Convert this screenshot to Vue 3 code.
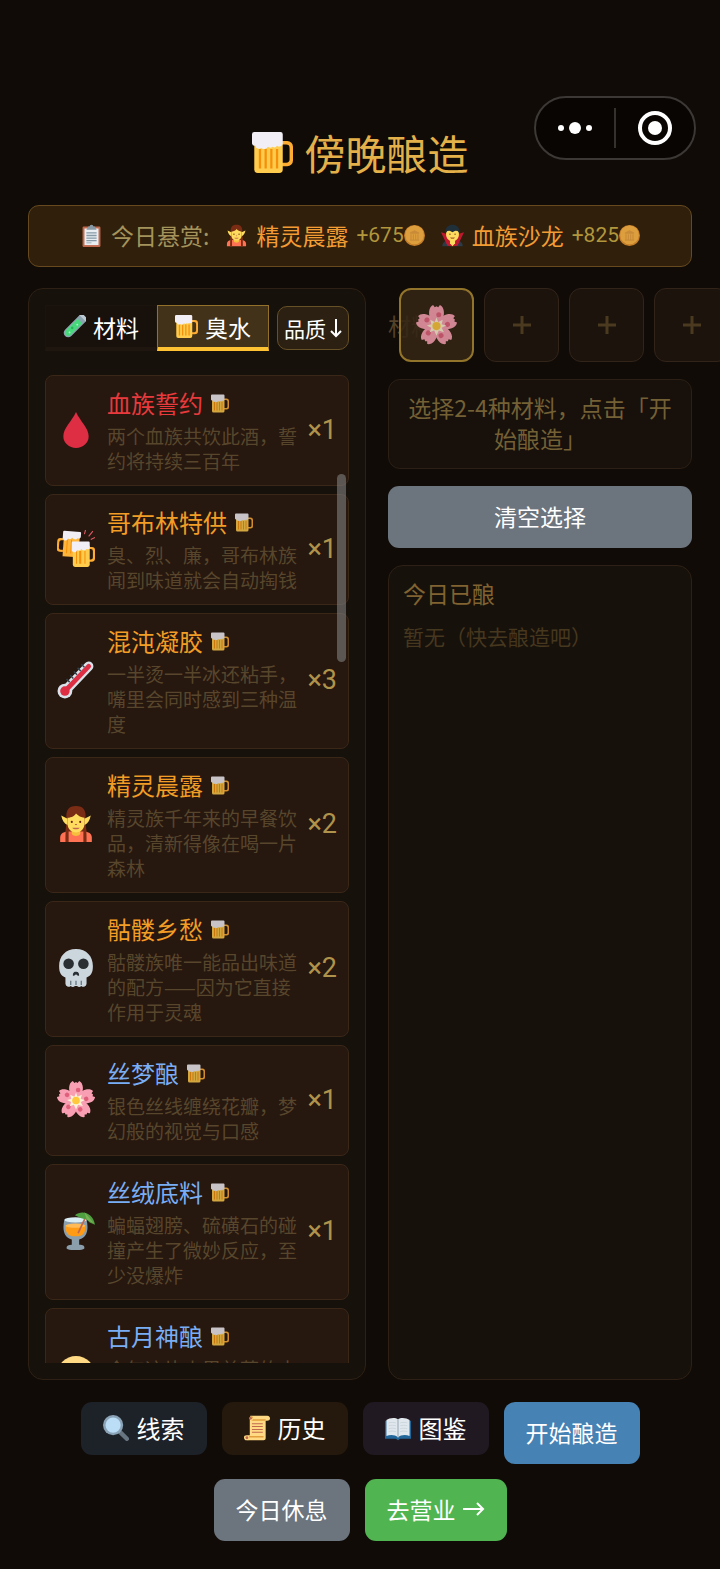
<script setup>
import { ref } from 'vue'

const tab = ref('brew')

const bounties = [
  { icon: 'elf', name: '精灵晨露', reward: 675 },
  { icon: 'vampire', name: '血族沙龙', reward: 825 },
]

const drinks = [
  { icon: 'drop', name: '血族誓约', tier: 'legend', count: 1, desc: '两个血族共饮此酒，誓约将持续三百年' },
  { icon: 'cheers', name: '哥布林特供', tier: 'epic', count: 1, desc: '臭、烈、廉，哥布林族闻到味道就会自动掏钱' },
  { icon: 'thermo', name: '混沌凝胶', tier: 'epic', count: 3, desc: '一半烫一半冰还粘手，嘴里会同时感到三种温度' },
  { icon: 'elf', name: '精灵晨露', tier: 'epic', count: 2, desc: '精灵族千年来的早餐饮品，清新得像在喝一片森林' },
  { icon: 'skull', name: '骷髅乡愁', tier: 'epic', count: 2, desc: '骷髅族唯一能品出味道的配方——因为它直接作用于灵魂' },
  { icon: 'flower', name: '丝梦酿', tier: 'rare', count: 1, desc: '银色丝线缠绕花瓣，梦幻般的视觉与口感' },
  { icon: 'cocktail', name: '丝绒底料', tier: 'rare', count: 1, desc: '蝙蝠翅膀、硫磺石的碰撞产生了微妙反应，至少没爆炸' },
  { icon: 'moon', name: '古月神酿', tier: 'rare', count: 1, desc: '今年这片山里美莓的水味道格外清甜，喝下去像月光' },
]

const slots = ref(['flower', null, null, null])
const clear = () => { slots.value = [null, null, null, null] }
</script>

<template>
  <svg class="sprite" aria-hidden="true">
    <symbol id="beer" viewBox="0 0 36 36">
      <path d="M26 8h5a5 5 0 0 1 5 5v12a5 5 0 0 1-5 5h-5v-3h4a3 3 0 0 0 3-3V14a3 3 0 0 0-3-3h-4z" fill="#ffac33" />
      <path d="M2 10h25v23a3 3 0 0 1-3 3H5a3 3 0 0 1-3-3z" fill="#ffcc4d" />
      <path d="M6 15h2v17H6zM11 15h2v17h-2zM16 15h2v17h-2zM21 15h2v17h-2z" fill="#f4900c" />
      <path d="M2 0h23a2 2 0 0 1 2 2v8a3 3 0 0 1-5 2 3 3 0 0 1-4 1 3 3 0 0 1-4 0 4 4 0 0 1-6 1 3 3 0 0 1-5-2 2.500 2.500 0 0 1-3-2V2a2 2 0 0 1 2-2z" fill="#f1eff5" />
    </symbol>
    <symbol id="clipboard" viewBox="0 0 36 36">
      <rect x="4" y="4" width="28" height="32" rx="2" fill="#c1694f" />
      <path d="M7 7h22v26H7z" fill="#e8eef2" />
      <path d="M13 4h2a3 3 0 0 1 6 0h2l3 5H10z" fill="#8899a6" />
      <path d="M10 13h16v2H10zM10 17h16v2H10zM10 21h16v2H10zM10 25h16v2H10zM10 29h8v1h-8z" fill="#8899a6" />
    </symbol>
    <symbol id="elf" viewBox="0 0 36 36">
      <path d="M9 14C8 5 11 1 18 1s10 4 9 13l1 13H8z" fill="#7b2c14" />
      <path d="M3 35v-4c0-4 3-6 8-6h14c5 0 8 2 8 6v4z" fill="#ff7354" />
      <path d="M4 10l6 3v6c-3-1-5-4-6-9zm28 0l-6 3v6c3-1 5-4 6-9z" fill="#ffdc5d" />
      <path d="M14 22h8v5c0 3-8 3-8 0z" fill="#f5be3d" />
      <path d="M10 12c4 0 7-2 8-4 2 2 5 4 8 4v6c0 5-4 8-8 8s-8-3-8-8z" fill="#ffdc5d" />
      <path d="M9 19l2 6v10H8c0-6 0-11 1-16zm18 0l-2 6v10h3c0-6 0-11-1-16z" fill="#7b2c14" />
      <circle cx="14" cy="16" r="1" fill="#662113" /><circle cx="22" cy="16" r="1" fill="#662113" />
      <path d="M17 18h2v1h-2z" fill="#c1694f" />
      <path d="M14.500 21.500h7c-1 2-6 2-7 0z" fill="#c1694f" />
    </symbol>
    <symbol id="vampire" viewBox="0 0 36 36">
      <path d="M2 35c0-6 4-8 9-9h14c5 1 9 3 9 9z" fill="#2b3b47" />
      <path d="M0 13l11 3 7 19-8-1zm36 0l-11 3-7 19 8-1z" fill="#be1931" />
      <path d="M14 22h8v8l-4 5-4-5z" fill="#ffdc5d" />
      <path d="M8 10h20v7c0 5-4 10-10 11C12 27 8 22 8 17z" fill="#ffdc5d" />
      <path d="M7 15C6 5 12 1 18 1s12 4 11 14l-3-4-3-1-5 3-5-3-3 1z" fill="#20303b" />
      <circle cx="14" cy="16" r="1" fill="#662113" /><circle cx="22" cy="16" r="1" fill="#662113" />
      <path d="M14 21h8l-2 2h-4z" fill="#a65a2a" />
    </symbol>
    <symbol id="coin" viewBox="0 0 36 36">
      <circle cx="18" cy="18" r="18" fill="#c57f2a" /><circle cx="18" cy="17" r="16" fill="#dd9f3d" />
      <path d="M10 13l8-4 8 4v2H10zM11 16h2v9h-2zM15 16h2v9h-2zM19 16h2v9h-2zM23 16h2v9h-2zM10 25h16v2H10z" fill="#c98b38" />
    </symbol>
    <symbol id="tube" viewBox="0 0 36 36">
      <g transform="rotate(45 18 18)">
        <path d="M11 -2h14v34a7 7 0 0 1-14 0z" fill="#8ba3ae" />
        <path d="M13 6h10v26a5 5 0 0 1-10 0z" fill="#48d87c" />
        <rect x="9" y="-5" width="18" height="5" rx="2" fill="#bcc9d2" />
        <circle cx="19" cy="13" r="1.500" fill="#a3f5bd" /><circle cx="17" cy="22" r="2" fill="#2fae5c" /><circle cx="19" cy="30" r="1.500" fill="#a3f5bd" />
      </g>
    </symbol>
    <symbol id="drop" viewBox="0 0 36 36">
      <path d="M18 1c4 9 12 15 12 23a12 11 0 0 1-24 0C6 16 14 10 18 1z" fill="#dd2e44" />
    </symbol>
    <symbol id="cheers" viewBox="0 0 36 36">
      <g transform="rotate(4 9 14)">
        <path d="M6 8H3a3 3 0 0 0-3 3v7a3 3 0 0 0 3 3h3v-2H4a2 2 0 0 1-2-2v-5a2 2 0 0 1 2-2h2z" fill="#ffac33" />
        <path d="M6 5h15v20H6z" fill="#ffb53a" /><path d="M9 9h1v13H9zM13 9h1v13h-1z" fill="#f4900c" />
        <path d="M6 1h15a1 1 0 0 1 1 1v4a2 2 0 0 1-3 1 3 3 0 0 1-5 0 3 3 0 0 1-4 1 2.500 2.500 0 0 1-5-1V2a1 1 0 0 1 1-1z" fill="#f1eff5" />
      </g>
      <path d="M30 16h3a3 3 0 0 1 3 3v8a3 3 0 0 1-3 3h-3v-2h2a2 2 0 0 0 2-2v-6a2 2 0 0 0-2-2h-2z" fill="#ffac33" />
      <path d="M15 15h16v18a2 2 0 0 1-2 2H17a2 2 0 0 1-2-2z" fill="#ffcc4d" />
      <path d="M18 20h1v12h-1zM21 20h2v12h-2zM26 20h1v12h-1z" fill="#f4900c" />
      <path d="M15 11h15a1 1 0 0 1 1 1v5a2 2 0 0 1-3 1 3 3 0 0 1-5 0 3 3 0 0 1-4 1 2.500 2.500 0 0 1-5-1v-6a1 1 0 0 1 1-1z" fill="#f1eff5" />
      <path d="M26 4l1-4M30 6l4-5M32 9l4-2" stroke="#e25a68" fill="none" />
    </symbol>
    <symbol id="thermo" viewBox="0 0 36 36">
      <path d="M7 29L30 5" stroke="#d9e2e9" stroke-width="9" stroke-linecap="round" />
      <circle cx="7.500" cy="28.500" r="7" fill="#d9e2e9" />
      <path d="M8 28L30 5" stroke="#dd2e44" stroke-width="4.500" stroke-linecap="round" />
      <circle cx="7.500" cy="28.500" r="4.500" fill="#dd2e44" />
      <path d="M9 17l3 3M12.500 13.500l3 3M16 10l3 3M19.500 6.500l3 3M23 3l3 3" stroke="#33414b" stroke-width="1.400" />
    </symbol>
    <symbol id="skull" viewBox="0 0 36 36">
      <path d="M18 0c10 0 16 7 16 16 0 7-2 9-6 11v6a3 3 0 0 1-5 2 3 3 0 0 1-4 0h-2a3 3 0 0 1-4 0 3 3 0 0 1-5-2v-6c-4-2-6-4-6-11C2 7 8 0 18 0z" fill="#ccd6dd" />
      <circle cx="11" cy="14" r="5" fill="#292f33" /><circle cx="25" cy="14" r="5" fill="#292f33" />
      <path d="M15 25c0-3 1.500-3.500 3-3.500s3 .5 3 3.500c-1 1-2 0-3-1-1 1-2 2-3 1z" fill="#292f33" />
      <path d="M13 30v4M18 30v4M23 30v4" stroke="#66757f" stroke-width="1.200" />
    </symbol>
    <symbol id="petal" viewBox="0 0 36 36">
      <path d="M18 19c-3-2-7-7-6.500-13 .2-3 1.500-5 3.500-6l1.500 2L18 1l1.500 1L21 0c2 1 3.300 3 3.500 6 .5 6-3.500 11-6.500 13z" fill="#f99fb4" />
      <circle cx="20" cy="8.500" r="2.200" fill="#e0607c" />
    </symbol>
    <symbol id="flower" viewBox="0 0 36 36">
      <use href="#petal" /><use href="#petal" transform="rotate(72 18 18)" /><use href="#petal" transform="rotate(144 18 18)" />
      <use href="#petal" transform="rotate(216 18 18)" /><use href="#petal" transform="rotate(288 18 18)" />
      <path d="M18 11l1.500 4 4-2-1 4 4 1-4 2 2 4-4.500-1.500L18 27l-2-4.500L12 24l1.500-4-4-2 4-1-1-4 4 2z" fill="#fff3d5" />
      <circle cx="18" cy="18.500" r="3.600" fill="#ffc83d" />
    </symbol>
    <symbol id="cocktail" viewBox="0 0 36 36">
      <path d="M7 7h21c2 9 1 17-7 19v5c4 0 5 1 5 3 0 3-17 3-17 0 0-2 2-3 5-3v-5C6 24 5 16 7 7z" fill="#8b9eab" />
      <path d="M8 13h19c0 7-2 10-9.500 10S8 20 8 13z" fill="#ff9b14" />
      <ellipse cx="17.500" cy="7.500" rx="10.500" ry="2.500" fill="#d9edf5" /><ellipse cx="17.500" cy="13" rx="9.500" ry="2" fill="#ffbb55" />
      <path d="M20 20l7-15" stroke="#c1694f" stroke-width="1.600" />
      <path d="M17 3C23-2 34 0 36 12l-5-2-3-3-5-1z" fill="#4f9f40" /><path d="M26 0l9 11-7-4z" fill="#77b255" />
    </symbol>
    <symbol id="moon" viewBox="0 0 36 36">
      <circle cx="18" cy="18" r="18" fill="#ffd983" /><circle cx="12" cy="15" r="2" fill="#66471b" /><circle cx="24" cy="15" r="2" fill="#66471b" />
    </symbol>
    <symbol id="lens" viewBox="0 0 36 36">
      <path d="M23 23l10 10" stroke="#66757f" stroke-width="6" stroke-linecap="round" />
      <circle cx="14" cy="14" r="14" fill="#8ba3b7" /><circle cx="14" cy="14" r="10.500" fill="#bbddf5" />
    </symbol>
    <symbol id="scroll" viewBox="0 0 36 36">
      <path d="M9 1h23c3 0 4 2 4 4s-2 3-4 3h-2v24c0 2-1 3-3 3H4c-3 0-4-2-4-4s1-3 4-3h4V4z" fill="#ffd983" />
      <path d="M9 1a3.500 3.500 0 0 1 0 7h21v-2H13zM4 28a3.500 3.500 0 0 1 0 7h2l2-4h19v-2H4z" fill="#e39f3d" />
      <circle cx="9" cy="4.500" r="2" fill="#c1694f" /><circle cx="4" cy="31.500" r="2" fill="#c1694f" />
      <path d="M11 12h15M11 16h15M11 20h15M11 24h15" stroke="#c1694f" stroke-width="1.400" />
    </symbol>
    <symbol id="book" viewBox="0 0 36 36">
      <path d="M0 8h36v25H21l-3 2-3-2H0z" fill="#226699" />
      <path d="M2 7c4-3 12-4 16-1 4-3 12-2 16 1v22c-5-2-12-2-16 2-4-4-11-4-16-2z" fill="#e1e8ed" />
      <path d="M18 6v25" stroke="#99aab5" stroke-width="1.500" />
      <path d="M5 11c3-1 7-1 10 0M5 15c3-1 7-1 10 0M5 19c3-1 7-1 10 0M5 23c3-1 7-1 10 0M21 11c3-1 7-1 10 0M21 15c3-1 7-1 10 0M21 19c3-1 7-1 10 0M21 23c3-1 7-1 10 0" stroke="#c3ced6" fill="none" />
    </symbol>
  </svg>

  <div class="page">
    <div class="capsule">
      <button class="capsule-btn" aria-label="更多">
        <svg width="34" height="12" viewBox="0 0 34 12"><circle cx="3" cy="6" r="3" /><circle cx="17" cy="6" r="6" /><circle cx="31" cy="6" r="3" /></svg>
      </button>
      <button class="capsule-btn" aria-label="关闭">
        <svg width="34" height="34" viewBox="0 0 34 34"><circle cx="17" cy="17" r="15" fill="none" stroke="#fff" stroke-width="4" /><circle cx="17" cy="17" r="7" /></svg>
      </button>
    </div>

    <h1 class="title"><svg class="title-icon"><use href="#beer" /></svg>傍晚酿造</h1>

    <section class="bounty">
      <span class="bounty-label"><svg class="icon-s"><use href="#clipboard" /></svg>今日悬赏:</span>
      <span v-for="b in bounties" :key="b.name" class="bounty-item">
        <svg class="icon-s"><use :href="'#' + b.icon" /></svg>
        <span class="bounty-name">{{ b.name }}</span>
        <span class="reward">+{{ b.reward }}<svg class="coin"><use href="#coin" /></svg></span>
      </span>
    </section>

    <main class="columns">
      <section class="panel stock">
        <div class="toolbar">
          <div class="tabs">
            <button class="tab" :class="{ active: tab === 'mat' }" @click="tab = 'mat'"><svg class="icon-s"><use href="#tube" /></svg>材料</button>
            <button class="tab" :class="{ active: tab === 'brew' }" @click="tab = 'brew'"><svg class="icon-s"><use href="#beer" /></svg>臭水</button>
          </div>
          <button class="sort">品质
            <svg width="12" height="20" viewBox="0 0 12 20"><path d="M6 1v17M1 13l5 5 5-5" fill="none" stroke="#fff" stroke-width="2" /></svg>
          </button>
        </div>
        <div class="list-wrap">
          <ul class="list">
            <li v-for="d in drinks" :key="d.name" class="item">
              <svg class="item-icon"><use :href="'#' + d.icon" /></svg>
              <div class="item-body">
                <div class="item-name" :class="d.tier">{{ d.name }}<svg class="mug"><use href="#beer" /></svg></div>
                <div class="item-desc">{{ d.desc }}</div>
              </div>
              <span class="count">×{{ d.count }}</span>
            </li>
          </ul>
          <div class="thumb"></div>
        </div>
      </section>

      <section class="brew">
        <div class="slots">
          <span class="slots-label">材料</span>
          <button v-for="(s, i) in slots" :key="i" class="slot" :class="{ filled: s }">
            <svg v-if="s" class="slot-icon"><use :href="'#' + s" /></svg>
            <svg v-else class="plus" viewBox="0 0 18 18"><path d="M9 0v18M0 9h18" stroke="#4b3a1f" stroke-width="3" /></svg>
          </button>
        </div>
        <p class="tip">选择2-4种材料，点击「开始酿造」</p>
        <button class="btn gray" @click="clear">清空选择</button>
        <div class="panel brewed">
          <h2 class="brewed-title">今日已酿</h2>
          <p class="brewed-empty">暂无（快去酿造吧）</p>
        </div>
      </section>
    </main>

    <footer class="actions">
      <button class="small clue"><svg class="icon-m"><use href="#lens" /></svg>线索</button>
      <button class="small history"><svg class="icon-m"><use href="#scroll" /></svg>历史</button>
      <button class="small codex"><svg class="icon-m"><use href="#book" /></svg>图鉴</button>
      <button class="btn blue">开始酿造</button>
      <button class="btn gray">今日休息</button>
      <button class="btn green">去营业
        <svg width="22" height="16" viewBox="0 0 22 16"><path d="M0 8h20M14 2l6 6-6 6" fill="none" stroke="#fff" stroke-width="2" /></svg>
      </button>
    </footer>
  </div>
</template>

<style>
body {
  background: #100b07;
}
</style>

<style scoped>
* {
  box-sizing: border-box;
}
.sprite {
  position: absolute;
  width: 0;
  height: 0;
}
.page {
  position: relative;
  display: flex;
  flex-direction: column;
  height: 100vh;
  padding: 124px 28px 28px;
  overflow: hidden;
  background: #100b07;
  font-family: "Noto Sans CJK SC", sans-serif;
  font-size: 23px;
  color: #fff;
}
button {
  padding: 0;
  border: 0;
  background: none;
  color: #fff;
  font: inherit;
  cursor: pointer;
}
svg {
  flex: none;
  overflow: visible;
}
.capsule {
  position: absolute;
  top: 96px;
  right: 24px;
  display: flex;
  align-items: center;
  width: 162px;
  height: 64px;
  border: 2px solid #3b3835;
  border-radius: 32px;
  background: #080502;
}
.capsule-btn {
  display: flex;
  flex: 1;
  align-items: center;
  justify-content: center;
  height: 40px;
}
.capsule-btn + .capsule-btn {
  border-left: 2px solid #35312d;
}
.capsule svg {
  fill: #fff;
}
.title {
  display: flex;
  align-items: center;
  justify-content: center;
  gap: 12px;
  margin: 0 0 25px;
  font-size: 41px;
  font-weight: 400;
  line-height: 56px;
  color: #e3b04a;
}
.title-icon {
  width: 41px;
  height: 41px;
}
.bounty {
  display: flex;
  align-items: center;
  justify-content: center;
  gap: 16px;
  height: 62px;
  margin-bottom: 21px;
  padding-bottom: 2px;
  border: 1px solid #66491f;
  border-radius: 11px;
  background: #2f1f0b;
  color: #a5935c;
}
.bounty-label,
.bounty-item {
  display: flex;
  align-items: center;
  gap: 8px;
  white-space: nowrap;
}
.icon-s {
  width: 23px;
  height: 23px;
}
.bounty-name {
  color: #f39c33;
}
.reward {
  display: flex;
  align-items: center;
  font-family: Roboto, sans-serif;
  font-size: 21px;
  color: #b2963c;
}
.coin {
  width: 21px;
  height: 21px;
}
.columns {
  display: grid;
  flex: 1;
  grid-template-columns: minmax(0, 338fr) minmax(0, 304fr);
  grid-template-rows: minmax(0, 1fr);
  gap: 22px;
  min-height: 0;
}
.panel {
  border: 1px solid #2e2015;
  border-radius: 15px;
  background: #17110b;
}
.stock {
  display: flex;
  flex-direction: column;
  gap: 24px;
  min-height: 0;
  padding: 16px;
}
.toolbar {
  display: flex;
  align-items: center;
  gap: 8px;
}
.tabs {
  display: flex;
  flex: 1;
}
.tab {
  display: flex;
  flex: 1;
  align-items: center;
  justify-content: center;
  gap: 7px;
  height: 46px;
  border: 1px solid #1b140d;
  border-bottom: 4px solid #1e160f;
  background: #17100b;
}
.tab.active {
  border-color: #94712a;
  border-bottom-color: #ffc233;
  background: #42321a;
}
.sort {
  display: flex;
  align-items: center;
  justify-content: center;
  gap: 4px;
  width: 72px;
  height: 44px;
  border: 1px solid #665026;
  border-radius: 10px;
  background: #2b2012;
  font-size: 21px;
}
.list-wrap {
  position: relative;
  flex: 1;
  min-height: 0;
}
.list {
  display: flex;
  flex-direction: column;
  gap: 8px;
  height: 100%;
  margin: 0;
  padding: 0;
  overflow-y: auto;
  scrollbar-width: none;
  list-style: none;
}
.item {
  display: flex;
  flex: none;
  align-items: center;
  gap: 12px;
  padding: 10px 11px 12px;
  border: 1px solid #3b2717;
  border-radius: 8px;
  background: #26170f;
}
.item-icon {
  width: 38px;
  height: 38px;
}
.item-body {
  display: grid;
  flex: 1;
  gap: 3px;
  min-width: 190px;
}
.item-name {
  display: flex;
  align-items: center;
  gap: 8px;
  font-size: 24px;
  line-height: 34px;
}
.legend {
  color: #e83a3c;
}
.epic {
  color: #f29d26;
}
.rare {
  color: #79aef5;
}
.mug {
  width: 18px;
  height: 19px;
  opacity: 0.8;
}
.item-desc {
  font-size: 19px;
  line-height: 25px;
  color: #58462c;
}
.count {
  margin-left: -4px;
  font-family: Roboto, "Noto Sans CJK SC", sans-serif;
  font-size: 27px;
  line-height: 34px;
  color: #b0934a;
}
.thumb {
  position: absolute;
  top: 10%;
  right: 3px;
  width: 9px;
  height: 19%;
  border-radius: 5px;
  background: rgba(128, 128, 128, 0.6);
}
.brew {
  display: flex;
  flex-direction: column;
  gap: 17px;
}
.slots {
  display: flex;
  align-items: center;
  gap: 10px;
}
.slots-label {
  flex: 0 0 1px;
  width: 1px;
  white-space: nowrap;
  color: #53412a;
}
.slot {
  display: flex;
  flex: none;
  align-items: center;
  justify-content: center;
  width: 75px;
  height: 74px;
  border: 1px solid #33241a;
  border-radius: 12px;
  background: #1b130c;
}
.slot.filled {
  border: 2px solid #93742b;
  background: rgba(52, 38, 20, 0.88);
}
.slot-icon {
  width: 41px;
  height: 41px;
  opacity: 0.8;
}
.plus {
  width: 18px;
  height: 18px;
}
.tip {
  margin: 0;
  padding: 12px 15px 14px;
  border: 1px solid #2c1f15;
  border-radius: 12px;
  background: #17100b;
  line-height: 31px;
  text-align: center;
  color: #746035;
}
.btn {
  display: flex;
  align-items: center;
  justify-content: center;
  gap: 7px;
  height: 62px;
  padding: 0 22px 3px;
  border-radius: 11px;
}
.gray {
  background: #6c747d;
}
.blue {
  background: #4682b4;
}
.green {
  background: #50b551;
}
.brewed {
  flex: 1;
  padding: 12px 14px;
}
.brewed-title {
  margin: 0 0 12px;
  font-size: 23px;
  font-weight: 400;
  line-height: 31px;
  color: #806331;
}
.brewed-empty {
  margin: 0;
  font-size: 21px;
  line-height: 31px;
  color: #46371f;
}
.actions {
  display: flex;
  flex-wrap: wrap;
  align-items: flex-start;
  justify-content: center;
  gap: 15px;
  margin-top: 22px;
}
.small {
  display: flex;
  align-items: center;
  justify-content: center;
  gap: 8px;
  height: 53px;
  padding: 0 22px 2px;
  border-radius: 11px;
  font-size: 24px;
}
.icon-m {
  width: 26px;
  height: 26px;
}
.clue {
  background: #1d2128;
}
.history {
  background: #24190c;
}
.codex {
  background: #211921;
}
</style>
